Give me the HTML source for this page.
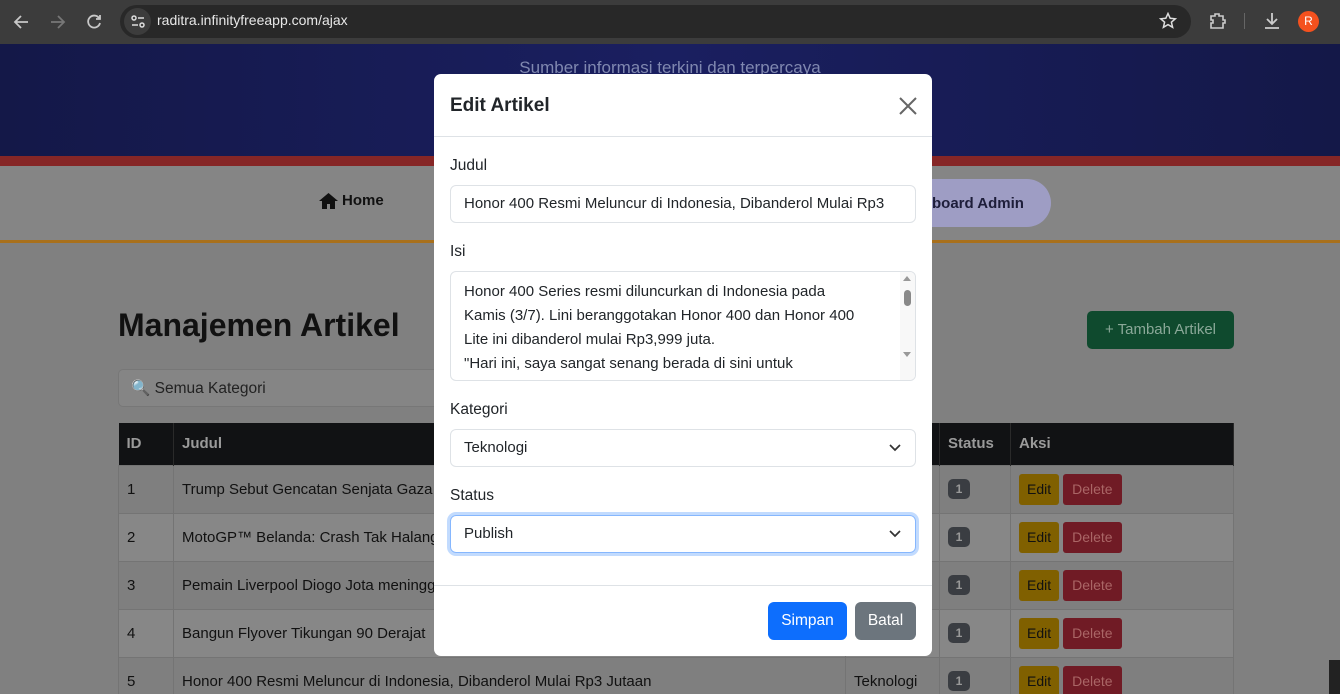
<!DOCTYPE html>
<html><head><meta charset="utf-8"><style>
*{box-sizing:border-box;margin:0;padding:0}
html,body{width:1340px;height:694px;overflow:hidden}
body{background:#808080;font-family:"Liberation Sans",sans-serif;position:relative}
.abs{position:absolute}
.chrome{left:0;top:0;width:1340px;height:44px;background:#3c3c3c}
.pill{left:120px;top:5px;width:1071px;height:33px;border-radius:17px;background:#282828}
.url{left:157px;top:12px;color:#e8e8e8;font-size:14px}
.hdr{left:0;top:44px;width:1340px;height:112px;background:linear-gradient(90deg,#141848,#1a1f60 50%,#141848)}
.red{left:0;top:156px;width:1340px;height:10px;background:#862626}
.nav{left:0;top:166px;width:1340px;height:74px;background:#858585}
.org{left:0;top:240px;width:1340px;height:3px;background:#a8701c}
table{position:absolute;left:118px;top:423px;width:1116px;border-collapse:collapse;font-size:15px}
th{background:#111214;color:#9a9a9a;text-align:left;height:42px;padding:0 8px;border-right:1px solid #2a2a2a}
td{height:48px;padding:0 8px;color:#111;border:1px solid #747474;background:#878787;white-space:nowrap;overflow:hidden}
tr:nth-child(even) td{background:#7f7f7f}
.badge{display:inline-block;width:22px;height:20px;border-radius:5px;background:#3a3d42;color:#999;font-size:12px;font-weight:bold;text-align:center;line-height:20px}
.be{display:inline-block;background:#806000;color:#111;border-radius:3px;padding:0 8px;height:31px;line-height:31px;font-size:14px}
.bd{display:inline-block;background:#701b25;color:#a66;border-radius:3px;padding:0 9px;height:31px;line-height:31px;font-size:14px;margin-left:4px}
.modal{left:434px;top:74px;width:498px;height:582px;background:#fff;border-radius:7px}
.lbl{position:absolute;left:16px;font-size:15.5px;color:#212529}
.inp{position:absolute;left:16px;width:466px;border:1px solid #dee2e6;border-radius:6px;font-size:15px;color:#212529;padding-left:13px}
.chev{position:absolute;right:14px;top:14px}
</style></head><body>
<div class="abs chrome"></div>
<svg class="abs" style="left:12px;top:12px" width="100" height="20" fill="none" stroke-width="1.8">
<path d="M16 10H4M9 4L3 10L9 16" stroke="#c8c8c8"/>
<path d="M39 10H51M46 4L52 10L46 16" stroke="#777"/>
<path d="M87 6A6 6 0 1 0 88 11M88 3V7H84" stroke="#c8c8c8"/>
</svg>
<div class="abs pill"></div>
<div class="abs" style="left:124px;top:8px;width:27px;height:27px;border-radius:50%;background:#3c3c3c"></div>
<svg class="abs" style="left:130px;top:14px" width="16" height="16" fill="none" stroke="#ddd" stroke-width="1.5"><circle cx="4" cy="4" r="2"/><path d="M8 4H14M2 11H8"/><circle cx="12" cy="11" r="2"/></svg>
<div class="abs url">raditra.infinityfreeapp.com/ajax</div>
<svg class="abs" style="left:1159px;top:12px" width="18" height="18" fill="none" stroke="#ddd" stroke-width="1.5"><path d="M9 1.5L11.2 6.3L16.3 6.8L12.4 10.2L13.6 15.3L9 12.6L4.4 15.3L5.6 10.2L1.7 6.8L6.8 6.3Z"/></svg>
<svg class="abs" style="left:1208px;top:11px" width="20" height="20" fill="none" stroke="#ccc" stroke-width="1.6"><path d="M3 5H7V3H11V5H15V9H17V12H15V17H3V12H5V9H3Z"/></svg>
<div class="abs" style="left:1244px;top:13px;width:1px;height:16px;background:#666"></div>
<svg class="abs" style="left:1262px;top:11px" width="20" height="20" fill="none" stroke="#ccc" stroke-width="1.8"><path d="M10 2V13M5 8L10 13L15 8M3 17H17"/></svg>
<div class="abs" style="left:1298px;top:11px;width:21px;height:21px;border-radius:50%;background:#f4511e;color:#fff;font-size:12px;text-align:center;line-height:21px">R</div>

<div class="abs hdr"></div>
<div class="abs" style="left:0;width:1340px;top:58px;text-align:center;color:#8088b0;font-size:17px">Sumber informasi terkini dan terpercaya</div>
<div class="abs red"></div>
<div class="abs nav"></div>
<svg class="abs" style="left:319px;top:193px" width="19" height="16" fill="#111"><path d="M9.5 0L19 8H16V16H11V11H8V16H3V8H0Z"/></svg>
<div class="abs" style="left:342px;top:192px;color:#111;font-size:15px;font-weight:bold">Home</div>
<div class="abs" style="left:880px;top:179px;width:171px;height:48px;border-radius:24px;background:#9e9dc4"></div>
<div class="abs" style="left:932px;top:195px;color:#1e1e3a;font-size:15px;font-weight:bold">board Admin</div>
<div class="abs org"></div>

<div class="abs" style="left:118px;top:307px;font-size:32px;font-weight:bold;color:#111">Manajemen Artikel</div>
<div class="abs" style="left:1087px;top:311px;width:147px;height:38px;border-radius:5px;background:#0f4a2e;color:#8aa898;font-size:15px;text-align:center;line-height:38px">+ Tambah Artikel</div>
<div class="abs" style="left:118px;top:369px;width:330px;height:38px;border:1px solid #777;border-radius:5px;background:#858585;color:#222;font-size:15.5px;padding:9px 0 0 12px">🔍 Semua Kategori</div>

<table>
<tr><th style="width:55px">ID</th><th style="width:672px">Judul</th><th style="width:94px">Kategori</th><th style="width:71px">Status</th><th>Aksi</th></tr>
<tr><td>1</td><td>Trump Sebut Gencatan Senjata Gaza</td><td></td><td><span class="badge">1</span></td><td><span class="be">Edit</span><span class="bd">Delete</span></td></tr>
<tr><td>2</td><td>MotoGP™ Belanda: Crash Tak Halangi</td><td></td><td><span class="badge">1</span></td><td><span class="be">Edit</span><span class="bd">Delete</span></td></tr>
<tr><td>3</td><td>Pemain Liverpool Diogo Jota meninggal</td><td></td><td><span class="badge">1</span></td><td><span class="be">Edit</span><span class="bd">Delete</span></td></tr>
<tr><td>4</td><td>Bangun Flyover Tikungan 90 Derajat</td><td></td><td><span class="badge">1</span></td><td><span class="be">Edit</span><span class="bd">Delete</span></td></tr>
<tr><td>5</td><td>Honor 400 Resmi Meluncur di Indonesia, Dibanderol Mulai Rp3 Jutaan</td><td>Teknologi</td><td><span class="badge">1</span></td><td><span class="be">Edit</span><span class="bd">Delete</span></td></tr>
</table>
<div class="abs" style="left:1329px;top:660px;width:11px;height:34px;background:#222"></div>

<div class="abs modal">
<div class="abs" style="left:16px;top:21px;font-size:19px;font-weight:bold;color:#212529">Edit Artikel</div>
<svg class="abs" style="left:465px;top:23px" width="18" height="18" stroke="#666" stroke-width="2"><path d="M1 1L17 17M17 1L1 17"/></svg>
<div class="abs" style="left:0;top:62px;width:498px;height:1px;background:#dee2e6"></div>
<div class="lbl" style="top:83px">Judul</div>
<div class="inp" style="top:111px;height:38px;line-height:36px;white-space:nowrap;overflow:hidden;padding-right:4px">Honor 400 Resmi Meluncur di Indonesia, Dibanderol Mulai Rp3</div>
<div class="lbl" style="top:169px">Isi</div>
<div class="inp" style="top:197px;height:110px;line-height:24px;padding-top:8px;overflow:hidden">Honor 400 Series resmi diluncurkan di Indonesia pada<br>Kamis (3/7). Lini beranggotakan Honor 400 dan Honor 400<br>Lite ini dibanderol mulai Rp3,999 juta.<br>"Hari ini, saya sangat senang berada di sini untuk
<div class="abs" style="right:0;top:0;width:15px;height:108px;background:#f8f8f8"></div>
<div class="abs" style="right:4px;top:4px;width:0;height:0;border-left:4px solid transparent;border-right:4px solid transparent;border-bottom:5px solid #999"></div>
<div class="abs" style="right:4px;top:18px;width:7px;height:16px;border-radius:4px;background:#888"></div>
<div class="abs" style="right:4px;top:80px;width:0;height:0;border-left:4px solid transparent;border-right:4px solid transparent;border-top:5px solid #999"></div>
</div>
<div class="lbl" style="top:327px">Kategori</div>
<div class="inp" style="top:355px;height:38px;line-height:36px">Teknologi<svg class="chev" width="12" height="8" fill="none" stroke="#333" stroke-width="1.7"><path d="M1 1L6 6L11 1"/></svg></div>
<div class="lbl" style="top:413px">Status</div>
<div class="inp" style="top:441px;height:38px;line-height:36px;border-color:#86b7fe;box-shadow:0 0 0 3px rgba(13,110,253,.25)">Publish<svg class="chev" width="12" height="8" fill="none" stroke="#333" stroke-width="1.7"><path d="M1 1L6 6L11 1"/></svg></div>
<div class="abs" style="left:0;top:511px;width:498px;height:1px;background:#dee2e6"></div>
<div class="abs" style="left:334px;top:528px;width:79px;height:38px;border-radius:6px;background:#0d6efd;color:#fff;font-size:15.5px;text-align:center;line-height:38px">Simpan</div>
<div class="abs" style="left:421px;top:528px;width:61px;height:38px;border-radius:6px;background:#6c757d;color:#fff;font-size:15.5px;text-align:center;line-height:38px">Batal</div>
</div>
</body></html>
